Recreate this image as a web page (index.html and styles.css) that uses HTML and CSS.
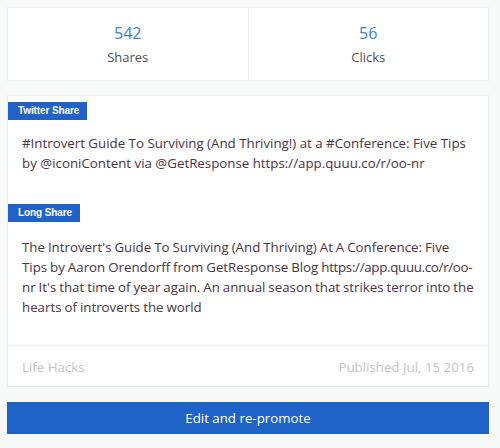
FILE: index.html
```html
<!DOCTYPE html>
<html>
<head>
<meta charset="utf-8">
<link rel="stylesheet" href="styles.css">
</head>
<body>
<div class="page">
  <div class="card stats">
    <div class="stat">
      <div class="num">542</div>
      <div class="label">Shares</div>
    </div>
    <div class="stat">
      <div class="num">56</div>
      <div class="label">Clicks</div>
    </div>
  </div>
  <div class="card post">
    <div class="section">
      <span class="badge">Twitter Share</span>
      <p class="text">#Introvert Guide To Surviving (And Thriving!) at a #Conference: Five Tips by @iconiContent via @GetResponse https://app.quuu.co/r/oo-nr</p>
    </div>
    <div class="section long">
      <span class="badge">Long Share</span>
      <p class="text">The Introvert's Guide To Surviving (And Thriving) At A Conference: Five Tips by Aaron Orendorff from GetResponse Blog <span class="url">https://app.quuu.co/r/oo-</span><wbr>nr It's that time of year again. An annual season that strikes terror into the hearts of introverts the world</p>
    </div>
    <div class="footer">
      <span>Life Hacks</span>
      <span>Published Jul, 15 2016</span>
    </div>
  </div>
  <button class="btn">Edit and re-promote</button>
</div>
</body>
</html>
```
FILE: styles.css
```css
html, body {
  margin: 0;
  padding: 0;
}
body {
  background: #f7f8f8;
  font-family: "Open Sans", Lato, sans-serif;
  width: 500px;
  height: 448px;
  overflow: hidden;
}
.page {
  width: 482px;
  padding: 7px 0 0 7px;
}
.card {
  background: #fff;
  border: 1px solid #eceeee;
  box-sizing: border-box;
}
.stats {
  display: flex;
  height: 74px;
}
.stat {
  flex: 1;
  display: flex;
  flex-direction: column;
  align-items: center;
  padding-top: 16px;
}
.stat + .stat {
  border-left: 1px solid #eceeee;
}
.num {
  color: #3d82dc;
  font-size: 16px;
  line-height: 19px;
}
.label {
  color: #505058;
  font-size: 13px;
  line-height: 18px;
  margin-top: 5px;
}
.post {
  margin-top: 14px;
  height: 292px;
  display: flex;
  flex-direction: column;
}
.section {
  padding: 1px 0 0 0;
}
.badge {
  display: inline-block;
  background: #2262c8;
  color: #fff;
  font-family: "Liberation Sans", Arial, sans-serif;
  font-weight: bold;
  font-size: 10px;
  line-height: 18px;
  padding: 0 8px 0 10px;
  letter-spacing: -0.1px;
}
.text {
  margin: 0;
  padding: 13px 14px 0 14px;
  color: #4a3346;
  font-size: 13.3px;
  line-height: 20px;
}
.url {
  letter-spacing: -0.3px;
}
.section.long {
  margin-top: 25px;
}
.section.long .text {
  padding-top: 15px;
  word-spacing: -0.5px;
}
.footer {
  margin-top: auto;
  border-top: 1px solid #eff0f0;
  height: 41px;
  box-sizing: border-box;
  padding: 2px 14px 0;
  display: flex;
  justify-content: space-between;
  align-items: center;
  color: #c4c4c8;
  font-size: 13.3px;
}
.btn {
  display: block;
  width: 482px;
  height: 32px;
  margin-top: 15px;
  border: 0;
  background: #2063c7;
  color: #fff;
  font-family: "Open Sans", Lato, sans-serif;
  font-size: 13.3px;
  padding: 0;
}
```
